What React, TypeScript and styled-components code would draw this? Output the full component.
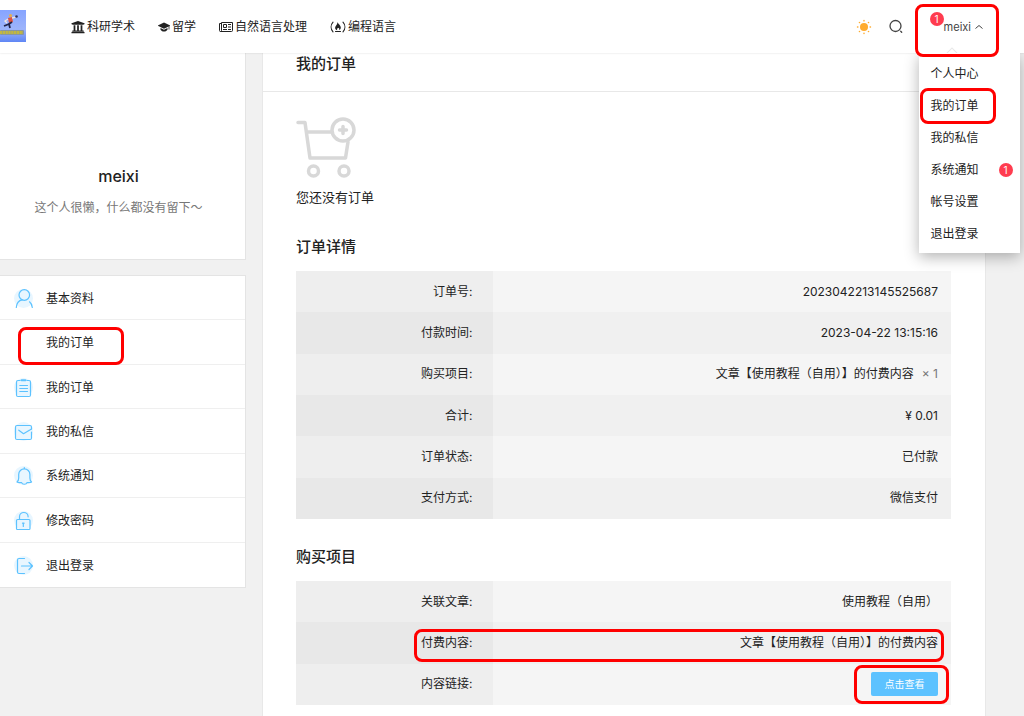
import React from "react";
import styled, { createGlobalStyle } from "styled-components";
import { FaUniversity } from "react-icons/fa";

const GlobalStyle = createGlobalStyle`
  *, *::before, *::after { box-sizing: border-box; }
  body {
    margin: 0;
    background: #f1f1f1;
    color: #222;
    font: 12px/20px Inter, "Noto Sans CJK SC", sans-serif;
  }
  a { color: inherit; text-decoration: none; }
  h1, h2, p, ul { margin: 0; padding: 0; }
  ul { list-style: none; }
`;

const Header = styled.header`
  position: relative;
  z-index: 2;
  display: flex;
  align-items: center;
  height: 53px;
  padding-right: 24px;
  background: #fff;
  box-shadow: 0 0 2px rgba(0, 0, 0, 0.14);
`;

const Logo = styled.a`
  display: block;
  width: 26px;
  height: 33px;
  margin-right: 45px;
  svg { display: block; }
`;

const Nav = styled.nav`
  display: flex;
  flex: 1;
  gap: 23px;
`;

const NavLink = styled.a`
  display: flex;
  align-items: center;
  gap: 2px;
  white-space: nowrap;
`;

const Tools = styled.div`
  display: flex;
  align-items: center;
  gap: 16px;
`;

const IconButton = styled.button`
  display: flex;
  padding: 0;
  border: 0;
  background: none;
`;

const User = styled.div`
  position: relative;
  margin-left: 7px;
`;

const UserButton = styled.button`
  display: flex;
  align-items: center;
  gap: 4px;
  height: 53px;
  padding: 0 17px;
  border: 0;
  background: none;
  color: #444;
  font: inherit;
  font-size: 11px;
`;

const Badge = styled.span`
  display: flex;
  align-items: center;
  justify-content: center;
  width: 14px;
  height: 14px;
  border-radius: 50%;
  background: #ff3c4f;
  color: #fff;
  font-size: 10px;
  line-height: 14px;
`;

const UserBadge = styled(Badge)`
  position: absolute;
  top: 12px;
  left: 3px;
`;

const Menu = styled.ul`
  position: absolute;
  top: 53px;
  left: -8px;
  width: 101px;
  padding: 5px 0 3px;
  background: #fff;
  box-shadow: 0 4px 14px rgba(0, 0, 0, 0.3);
  clip-path: inset(0 -24px -24px -24px);
`;

const MenuArrow = styled.span`
  position: absolute;
  top: 49px;
  left: 21px;
  width: 8px;
  height: 8px;
  border: 1px solid #e8e8e8;
  transform: rotate(45deg);
`;

const MenuItem = styled.li`
  position: relative;
  a {
    display: flex;
    align-items: center;
    justify-content: space-between;
    height: 32px;
    padding: 0 7px 0 12px;
  }
`;

const Mark = styled.span<{ $inset: string }>`
  position: absolute;
  inset: ${(p) => p.$inset};
  z-index: 1;
  border: 3px solid #f00;
  border-radius: 8px;
  pointer-events: none;
`;

const Page = styled.div`
  display: grid;
  grid-template-columns: 246px minmax(0, 1fr);
  gap: 16px;
  padding-right: 38px;
`;

const Side = styled.aside`
  display: flex;
  flex-direction: column;
  gap: 15px;
`;

const Profile = styled.section`
  display: flex;
  flex-direction: column;
  align-items: center;
  gap: 10px;
  height: 207px;
  padding: 111px 8px 0 0;
  border: solid #e4e4e4;
  border-width: 0 1px 1px 0;
  background: #fff;
`;

const Name = styled.h2`
  font-size: 16px;
  font-weight: 500;
  line-height: 24px;
`;

const Bio = styled.p`
  color: #777;
`;

const SideMenu = styled.ul`
  display: grid;
  grid-auto-rows: 1fr;
  height: 313px;
  border: solid #e4e4e4;
  border-width: 1px 1px 1px 0;
  background: #fff;
`;

const SideItem = styled.li`
  position: relative;
  &:not(:last-child) { border-bottom: 1px solid #efefef; }
  a {
    display: flex;
    align-items: center;
    gap: 12px;
    height: 100%;
    padding: 2px 0 0 14px;
  }
`;

const IconSlot = styled.span`
  display: block;
  width: 20px;
  height: 20px;
  svg { display: block; }
`;

const Main = styled.main`
  min-height: 663px;
  border: solid #e8e8e8;
  border-width: 0 1px;
  background: #fff;
`;

const Title = styled.h1`
  height: 39px;
  padding: 0 33px;
  border-bottom: 1px solid #e8e8e8;
  font-size: 15px;
  font-weight: 500;
  line-height: 22px;
`;

const Content = styled.div`
  padding: 25px 34px 12px 33px;
`;

const Empty = styled.div`
  display: flex;
  flex-direction: column;
  gap: 6px;
  font-size: 13px;
  line-height: 24px;
`;

const Section = styled.section`
  margin-top: 26px;
`;

const SectionTitle = styled.h2`
  margin-bottom: 12px;
  font-size: 15px;
  font-weight: 500;
  line-height: 24px;
`;

const Table = styled.table<{ $height: number }>`
  width: 100%;
  height: ${(p) => p.$height}px;
  border-collapse: collapse;
  table-layout: fixed;
`;

const Row = styled.tr`
  position: relative;
  background: #f5f5f5;
  &:nth-child(even) { background: #f0f0f0; }
  &:nth-child(even) th { background: #e8e8e8; }
`;

const Label = styled.th`
  width: 30%;
  padding: 0 20px 0 0;
  background: #eee;
  font-weight: 400;
  text-align: right;
`;

const Value = styled.td`
  height: 41px;
  padding: 0 13px 0 0;
  text-align: right;
`;

const Count = styled.span`
  margin-left: 8px;
  color: #777;
`;

const ButtonWrap = styled.span`
  position: relative;
  display: inline-block;
  vertical-align: middle;
`;

const ViewButton = styled.button`
  display: block;
  width: 67px;
  height: 24px;
  padding: 0;
  border: 0;
  border-radius: 2px;
  background: #5cc2ff;
  color: #fff;
  font: inherit;
  font-size: 10px;
`;

const LogoArt = () => (
  <svg width="26" height="32" viewBox="0 0 26 32">
    <defs>
      <linearGradient id="sky" x1="0" y1="0" x2="0" y2="1">
        <stop offset="0" stopColor="#86a4ff" />
        <stop offset="0.6" stopColor="#9db4fb" />
        <stop offset="1" stopColor="#5f86f5" />
      </linearGradient>
    </defs>
    <rect width="26" height="32" fill="url(#sky)" />
    <circle cx="10.500" cy="5.500" r="1.600" fill="#e8b04a" />
    <path d="M8 8l4-1 1 5-4 1z" fill="#e0523e" />
    <path d="M12 8l4-1M8 9l-3 2 2 2" stroke="#f0e6e0" strokeWidth="1.300" fill="none" />
    <path d="M12 12l-3 2 1 4M9 14l-5 2" stroke="#23264a" strokeWidth="1.800" fill="none" />
    <circle cx="16.500" cy="6.500" r="1.300" fill="#2b2f55" />
    <rect x="0" y="20" width="24" height="5" rx="1" fill="#8796a0" />
    <path d="M0 22.500h23" stroke="#c2b840" strokeWidth="3" strokeDasharray="2.300 0.500" />
  </svg>
);

const GradCap = () => (
  <svg width="12" height="12" viewBox="0 0 12 12" fill="#222">
    <path d="M6 1.500l5.700 2.800c.4.200.4.500 0 .7L6 7.800.3 5c-.4-.2-.4-.5 0-.7z" />
    <path d="M2.500 7l3.500 1.700L9.500 7v1.700C8.500 10 7.300 10.500 6 10.500S3.500 10 2.500 8.700z" />
    <path d="M11 4.800v3.700" stroke="#222" strokeWidth="0.800" />
  </svg>
);

const Newspaper = () => (
  <svg width="14" height="12" viewBox="0 0 14 12" fill="none" stroke="#222" strokeWidth="1">
    <path d="M2.500 2.500H.5v7a1 1 0 0 0 2 0v-8h11v8a1 1 0 0 1-1 1h-11" />
    <path d="M4.500 3.500h3v3h-3zM4 8.500h4M9 3.500h3M9 6h3M9 8.500h3" />
  </svg>
);

const Campfire = () => (
  <svg width="16" height="12" viewBox="0 0 16 12" fill="none" stroke="#222" strokeWidth="1.100" strokeLinecap="round">
    <path d="M3 1.200C.5 4 .5 8 3 10.800M13 1.200c2.500 2.800 2.500 6.800 0 9.600M5.500 10.500h5" />
    <path d="M7.500 1c.4 2 3.300 3 3.300 5.600 0 1.300-.8 2.200-1.800 2.600.6-1 .2-1.700-.5-2.400-.2.500-.6.600-.8.300-.6.600-.9 1.300-.4 2.100-1.200-.3-2.200-1.200-2.200-2.500C5.100 4.800 7.500 4 7.500 1z" fill="#222" stroke="none" />
  </svg>
);

const Sun = () => (
  <svg width="16" height="16" viewBox="0 0 16 16" fill="none" stroke="#ffab2d" strokeWidth="1.400" strokeLinecap="round">
    <circle cx="8" cy="8" r="4" fill="#ffab2d" stroke="none" />
    <path d="M8 1.500v.4M8 14.100v.4M1.500 8h.4M14.100 8h.4M3.400 3.400l.2.200M12.400 12.400l.2.200M3.400 12.600l.2-.2M12.400 3.600l.2-.2" />
  </svg>
);

const Search = () => (
  <svg width="16" height="16" viewBox="0 0 16 16" fill="none" stroke="#444" strokeWidth="1.300" strokeLinecap="round">
    <circle cx="7.500" cy="7" r="5.500" />
    <path d="M12.700 12.200l1 1" />
  </svg>
);

const Chevron = () => (
  <svg width="8" height="8" viewBox="0 0 8 8" fill="none" stroke="#444" strokeWidth="1">
    <path d="M.5 5.500l3.500-3 3.500 3" />
  </svg>
);

const Cart = () => (
  <svg width="60" height="62" viewBox="0 0 60 62" fill="none" stroke="#d8d8d8" strokeWidth="3.500" strokeLinecap="round" strokeLinejoin="round">
    <path d="M2 5.500h7L14 41h35.500l2.500-16M11 15h24" />
    <circle cx="47" cy="13" r="11" />
    <path d="M47 9.500v7M43.500 13h7" />
    <circle cx="17.500" cy="54" r="5" />
    <circle cx="48" cy="54" r="5" />
  </svg>
);

const sideArt: Record<string, React.ReactNode> = {
  user: <><circle cx="10.300" cy="6" r="5.300" /><path d="M2.300 18.500c.3-4 2.600-7.200 6-7.700M15.500 12.800c1.700 1.300 2.600 3.200 2.800 5.700" /></>,
  order: <><path d="M6 2.500H4a1.500 1.500 0 0 0-1.500 1.500v13A1.500 1.500 0 0 0 4 18.500h11a1.500 1.500 0 0 0 1.500-1.500V4A1.500 1.500 0 0 0 15 2.500h-2M5.800 7.500h7.700M5.800 10.500h7.700M5.800 13.500h7.700" /><path d="M7.500 2.300h4" strokeWidth="2" /></>,
  mail: <><path d="M17.500 7V5A1.500 1.500 0 0 0 16 3.500H3A1.500 1.500 0 0 0 1.500 5v11A1.500 1.500 0 0 0 3 17.500h13a1.500 1.500 0 0 0 1.500-1.500v-6" /><path d="M4.800 8.200l4.700 3.500 8-4.800" /></>,
  bell: <path d="M10.300 1.500v1M3 16c1.300-1 1.700-2 1.700-4V8.500a5.600 5.600 0 0 1 11.200 0V12c0 2 .4 3 1.700 4-1.600 1-3 .4-4.600.6-.7 2.200-4.700 2.200-5.400 0C6 16.400 4.600 17 3 16z" />,
  lock: <><rect x="2.500" y="8.500" width="13.500" height="10" rx="1" /><path d="M5.500 8.500V5.800a4.300 4.300 0 0 1 8.600 0M9.300 12.500v3M8.500 12.200h1.600" /></>,
  exit: <><path d="M10.500 2.500H5A1.500 1.500 0 0 0 3.500 4v12A1.500 1.500 0 0 0 5 17.500h5.500M7.500 10h11M15 6.500l3.500 3.500-3.500 3.500" /></>,
};

const SideIcon = ({ name }: { name: string }) => (
  <svg width="20" height="20" viewBox="0 0 20 20" fill="none" stroke="#5cc2ff" strokeWidth="1.200" strokeLinecap="round" strokeLinejoin="round">
    <circle cx="9.500" cy="9.500" r="9.500" fill="#e8f6ff" stroke="none" />
    {sideArt[name]}
  </svg>
);

const navItems = [
  { text: "科研学术", icon: <FaUniversity size={14} /> },
  { text: "留学", icon: <GradCap /> },
  { text: "自然语言处理", icon: <Newspaper /> },
  { text: "编程语言", icon: <Campfire /> },
];

const menuItems: { text: string; count?: number; marked?: boolean }[] = [
  { text: "个人中心" },
  { text: "我的订单", marked: true },
  { text: "我的私信" },
  { text: "系统通知", count: 1 },
  { text: "帐号设置" },
  { text: "退出登录" },
];

const sideItems: { text: string; icon?: string; marked?: boolean }[] = [
  { text: "基本资料", icon: "user" },
  { text: "我的订单", marked: true },
  { text: "我的订单", icon: "order" },
  { text: "我的私信", icon: "mail" },
  { text: "系统通知", icon: "bell" },
  { text: "修改密码", icon: "lock" },
  { text: "退出登录", icon: "exit" },
];

const details: [string, React.ReactNode][] = [
  ["订单号:", "2023042213145525687"],
  ["付款时间:", "2023-04-22 13:15:16"],
  ["购买项目:", <>文章【使用教程（自用）】的付费内容<Count>× 1</Count></>],
  ["合计:", "¥ 0.01"],
  ["订单状态:", "已付款"],
  ["支付方式:", "微信支付"],
];

export default function App() {
  return (
    <>
      <GlobalStyle />
      <Header>
        <Logo href="#" aria-label="meixi"><LogoArt /></Logo>
        <Nav>
          {navItems.map((n) => (
            <NavLink href="#" key={n.text}>{n.icon}{n.text}</NavLink>
          ))}
        </Nav>
        <Tools>
          <IconButton aria-label="日间模式"><Sun /></IconButton>
          <IconButton aria-label="搜索"><Search /></IconButton>
          <User>
            <UserButton>meixi<Chevron /></UserButton>
            <UserBadge>1</UserBadge>
            <MenuArrow />
            <Menu>
              {menuItems.map((m) => (
                <MenuItem key={m.text}>
                  <a href="#">{m.text}{m.count && <Badge>{m.count}</Badge>}</a>
                  {m.marked && <Mark $inset="-2px 24px -2px 1px" />}
                </MenuItem>
              ))}
            </Menu>
            <Mark $inset="4px 1px -4px -12px" />
          </User>
        </Tools>
      </Header>
      <Page>
        <Side>
          <Profile>
            <Name>meixi</Name>
            <Bio>这个人很懒，什么都没有留下～</Bio>
          </Profile>
          <SideMenu>
            {sideItems.map((s, i) => (
              <SideItem key={i}>
                <a href="#"><IconSlot>{s.icon && <SideIcon name={s.icon} />}</IconSlot>{s.text}</a>
                {s.marked && <Mark $inset="7px 121px -1px 18px" />}
              </SideItem>
            ))}
          </SideMenu>
        </Side>
        <Main>
          <Title>我的订单</Title>
          <Content>
            <Empty>
              <Cart />
              <p>您还没有订单</p>
            </Empty>
            <Section>
              <SectionTitle>订单详情</SectionTitle>
              <Table $height={248}>
                <tbody>
                  {details.map(([k, v]) => (
                    <Row key={k}><Label scope="row">{k}</Label><Value>{v}</Value></Row>
                  ))}
                </tbody>
              </Table>
            </Section>
            <Section>
              <SectionTitle>购买项目</SectionTitle>
              <Table $height={124}>
                <tbody>
                  <Row><Label scope="row">关联文章:</Label><Value>使用教程（自用）</Value></Row>
                  <Row>
                    <Label scope="row">付费内容:</Label>
                    <Value>文章【使用教程（自用）】的付费内容<Mark $inset="7px 7px 2px 118px" /></Value>
                  </Row>
                  <Row>
                    <Label scope="row">内容链接:</Label>
                    <Value>
                      <ButtonWrap>
                        <ViewButton>点击查看</ViewButton>
                        <Mark $inset="-7px -11px -8px -17px" />
                      </ButtonWrap>
                    </Value>
                  </Row>
                </tbody>
              </Table>
            </Section>
          </Content>
        </Main>
      </Page>
    </>
  );
}
